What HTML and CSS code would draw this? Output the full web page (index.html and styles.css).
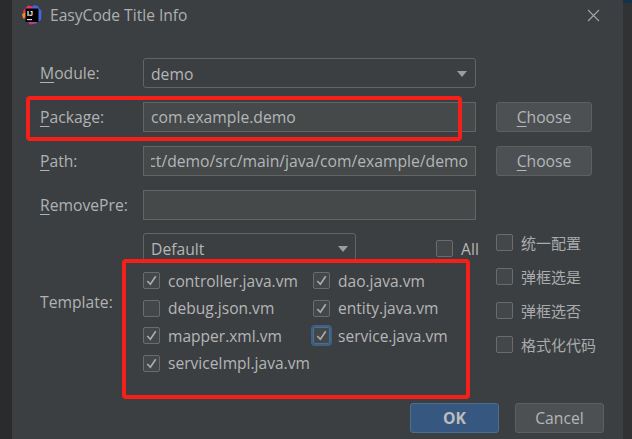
FILE: index.html
```html
<!DOCTYPE html>
<html lang="en">
<head>
<meta charset="utf-8">
<title>EasyCode Title Info</title>
<link rel="stylesheet" href="styles.css">
</head>
<body>
<div class="edge edge-left"></div>
<main class="dialog">
  <header class="titlebar">
    <svg class="app-icon" width="20" height="20" viewBox="0 0 20 20" aria-hidden="true">
      <path d="M1 6 L6 0.5 L12 2 L10 12 L3 14 Z" fill="#e8336e"/>
      <path d="M11 0.5 L15 0.5 L19.5 6 L19 15 L13 19 L9 10 Z" fill="#4468e0"/>
      <path d="M0 9 L4 7 L5 13 L1 13.5 Z" fill="#f58a25"/>
      <path d="M2 13 L8 19.5 L14 18.5 L8 10 Z" fill="#c03a8e"/>
      <rect x="3.5" y="3.5" width="13" height="13.5" fill="#000"/>
      <text x="5" y="10.8" class="app-icon-text">IJ</text>
      <rect x="5" y="14" width="5" height="1.2" fill="#ddd"/>
    </svg>
    <h1 class="title">EasyCode Title Info</h1>
    <svg class="close" width="13" height="13" viewBox="0 0 13 13" aria-hidden="true"><path d="M1 1 L12 12 M12 1 L1 12" stroke="#a3a5a6" stroke-width="1.1" fill="none"/></svg>
  </header>

  <section class="form">
    <label class="label"><u>M</u>odule:</label>
    <div class="field combo"><span>demo</span><i class="arrow"></i></div>
    <span></span>

    <label class="label"><u>P</u>ackage:</label>
    <div class="field">com.example.demo</div>
    <button class="btn"><u>C</u>hoose</button>

    <label class="label"><u>P</u>ath:</label>
    <div class="field path"><div class="path-clip"><span>ct/demo/src/main/java/com/example/demo</span></div></div>
    <button class="btn"><u>C</u>hoose</button>

    <label class="label"><u>R</u>emovePre:</label>
    <div class="field"></div>
    <span></span>
  </section>

  <section class="lower">
    <div class="template-label">Template:</div>
    <div class="template-main">
      <div class="template-top">
        <div class="combo-small"><span>Default</span><i class="arrow"></i></div>
        <div class="check all"><i class="box"></i><span>All</span></div>
      </div>
      <div class="template-grid">
        <div class="check"><i class="box on"><svg viewBox="0 0 16 16"><path d="M3.5 8.5 L6.8 12 L12.5 3.5"/></svg></i><span>controller.java.vm</span></div>
        <div class="check"><i class="box on"><svg viewBox="0 0 16 16"><path d="M3.5 8.5 L6.8 12 L12.5 3.5"/></svg></i><span>dao.java.vm</span></div>
        <div class="check"><i class="box"></i><span>debug.json.vm</span></div>
        <div class="check"><i class="box on"><svg viewBox="0 0 16 16"><path d="M3.5 8.5 L6.8 12 L12.5 3.5"/></svg></i><span>entity.java.vm</span></div>
        <div class="check"><i class="box on"><svg viewBox="0 0 16 16"><path d="M3.5 8.5 L6.8 12 L12.5 3.5"/></svg></i><span>mapper.xml.vm</span></div>
        <div class="check"><i class="box on focus"><svg viewBox="0 0 16 16"><path d="M3.5 8.5 L6.8 12 L12.5 3.5"/></svg></i><span>service.java.vm</span></div>
        <div class="check"><i class="box on"><svg viewBox="0 0 16 16"><path d="M3.5 8.5 L6.8 12 L12.5 3.5"/></svg></i><span>serviceImpl.java.vm</span></div>
      </div>
    </div>
    <div class="options">
      <div class="check cjk"><i class="box"></i><span>统一配置</span></div>
      <div class="check cjk"><i class="box"></i><span>弹框选是</span></div>
      <div class="check cjk"><i class="box"></i><span>弹框选否</span></div>
      <div class="check cjk"><i class="box"></i><span>格式化代码</span></div>
    </div>
  </section>

  <footer class="footer">
    <button class="btn primary">OK</button>
    <button class="btn">Cancel</button>
  </footer>
</main>
<div class="edge edge-right"><i class="edge-accent"></i></div>

<div class="mark mark-package"></div>
<div class="mark mark-templates"></div>
</body>
</html>
```
FILE: styles.css
```css
* { box-sizing: border-box; }
html, body { height: 100%; }
body {
  margin: 0;
  width: 632px;
  height: 439px;
  overflow: hidden;
  display: flex;
  position: relative;
  background: #3c3f41;
  color: #b4b6b8;
  font-family: "Open Sans", "Noto Sans CJK SC", sans-serif;
  font-size: 15.7px;
}
.edge { flex: none; background: #2b2c2d; }
.edge-left { width: 12px; background: #2a2b2c; }
.edge-right { width: 9px; background: #303234; }
.edge-accent { display: block; height: 3px; background: #12324e; }
.dialog { flex: none; width: 611px; height: 439px; background: #3c3f41; display: flex; flex-direction: column; }

.titlebar { height: 32px; display: flex; align-items: center; padding: 0 0 2px 10px; flex: none; }
.app-icon { flex: none; }
.app-icon-text { font: 700 7px "Liberation Sans", sans-serif; fill: #fff; }
.title { margin: 0 0 0 8px; font-size: 15.6px; font-weight: 400; color: #adafb1; flex: 1; }
.close { flex: none; margin-right: 23px; }

.form {
  margin-top: 26px;
  padding-left: 28px;
  display: grid;
  grid-template-columns: 103px 333px 116px;
  grid-auto-rows: 30px;
  row-gap: 14px;
  align-items: center;
}
.form .btn { margin-left: 20px; width: 96px; height: 30px; }
.label { color: #b0b2b4; }
.label u, .btn u { text-underline-offset: 3px; }
.field {
  height: 30px;
  border: 1px solid #646464;
  background: #45494a;
  padding: 0 7px;
  display: flex;
  align-items: center;
  color: #b4b6b8;
  white-space: nowrap;
  overflow: hidden;
}
.combo { background: #3c3f41; border-radius: 3px; justify-content: space-between; padding: 1px 8px 0 7px; }
.path-clip { display: flex; justify-content: flex-end; overflow: hidden; width: 100%; }
.path-clip span { flex: none; }
.arrow { width: 0; height: 0; border-left: 5.5px solid transparent; border-right: 5.5px solid transparent; border-top: 6.5px solid #9a9c9e; flex: none; }

.btn {
  font: inherit;
  color: #b4b6b8;
  background: #4c5052;
  border: 1px solid #5e6060;
  border-radius: 3px;
  padding: 0;
}
.primary { background: #365880; border-color: #4c708c; font-weight: 700; color: #bbbdbe; }

.lower {
  margin-top: 13px;
  padding-left: 28px;
  display: flex;
  height: 158px;
  flex: none;
}
.template-label { width: 103px; padding-top: 58px; color: #b0b2b4; flex: none; }
.template-main { width: 353px; flex: none; }
.template-top { display: flex; align-items: flex-start; }
.combo-small {
  width: 213px;
  height: 30px;
  border: 1px solid #646464;
  border-radius: 3px;
  padding: 2px 7px 0 7px;
  display: flex;
  align-items: center;
  justify-content: space-between;
}
.all { margin-left: 80px; margin-top: 7px; }
.template-grid {
  margin-top: 4px;
  display: grid;
  grid-template-columns: 170px 1fr;
  grid-auto-rows: 27.5px;
  align-items: center;
  font-size: 15.55px;
}
.check { display: flex; align-items: center; gap: 8px; white-space: nowrap; height: 17px; }
.box {
  width: 17px;
  height: 17px;
  flex: none;
  border: 1px solid #6b6b6b;
  border-radius: 2px;
  background: #43474a;
  display: block;
}
.box svg { display: block; width: 15px; height: 15px; fill: none; stroke: #a9abad; stroke-width: 1.8; }
.box.focus { outline: 2px solid #3d6185; border-color: #4c708c; }
.options { display: flex; flex-direction: column; gap: 17px; padding-top: 1px; }
.cjk { font-size: 15px; color: #a9abad; }

.footer { display: flex; justify-content: flex-end; gap: 16px; padding-right: 19px; margin-top: 12px; flex: none; }
.footer .btn { width: 89px; height: 30px; }

.mark { position: absolute; border: 4px solid #f5201a; border-radius: 4px; pointer-events: none; }
.mark-package { left: 26px; top: 96px; width: 436px; height: 45px; }
.mark-templates { left: 122px; top: 259px; width: 348px; height: 140px; }
```
